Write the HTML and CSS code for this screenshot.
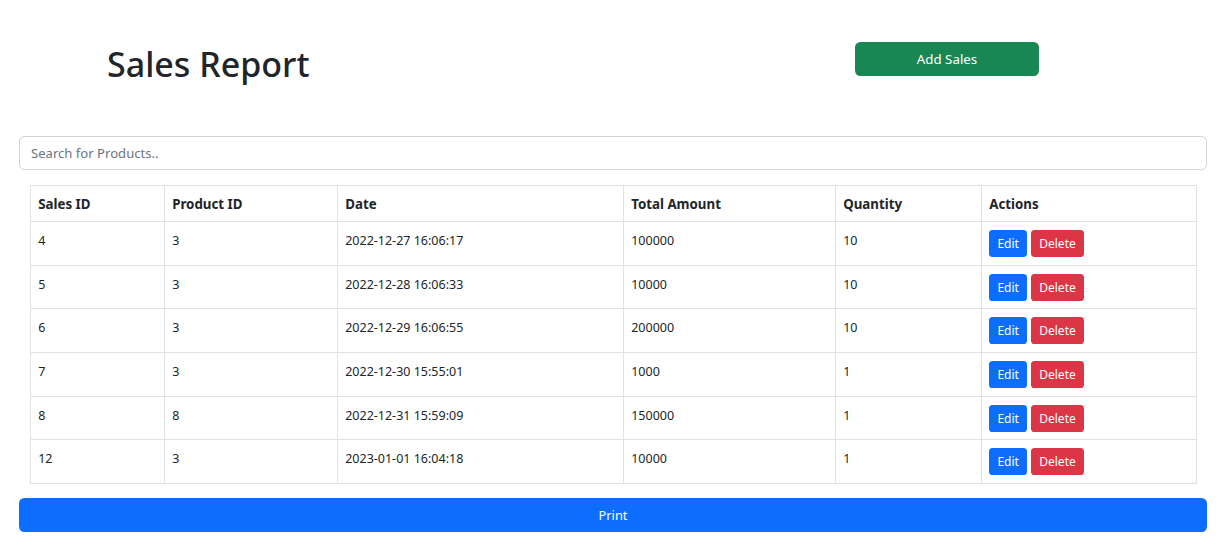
FILE: index.html
```html
<!DOCTYPE html>
<html lang="en">
<head>
<meta charset="utf-8">
<title>Sales Report</title>
<link rel="stylesheet" href="styles.css">
</head>
<body>
<div class="page">
  <div class="header">
    <h1 class="title">Sales Report</h1>
    <button class="btn btn-add">Add Sales</button>
  </div>
  <input class="search" type="text" placeholder="Search for Products..">
  <div class="table-wrap">
    <table class="sales">
      <colgroup>
        <col class="c1"><col class="c2"><col class="c3"><col class="c4"><col class="c5"><col class="c6">
      </colgroup>
      <thead>
        <tr><th>Sales ID</th><th>Product ID</th><th>Date</th><th>Total Amount</th><th>Quantity</th><th>Actions</th></tr>
      </thead>
      <tbody>
        <tr><td>4</td><td>3</td><td>2022-12-27 16:06:17</td><td>100000</td><td>10</td><td><div class="actions"><button class="sm edit">Edit</button><button class="sm del">Delete</button></div></td></tr>
        <tr><td>5</td><td>3</td><td>2022-12-28 16:06:33</td><td>10000</td><td>10</td><td><div class="actions"><button class="sm edit">Edit</button><button class="sm del">Delete</button></div></td></tr>
        <tr><td>6</td><td>3</td><td>2022-12-29 16:06:55</td><td>200000</td><td>10</td><td><div class="actions"><button class="sm edit">Edit</button><button class="sm del">Delete</button></div></td></tr>
        <tr><td>7</td><td>3</td><td>2022-12-30 15:55:01</td><td>1000</td><td>1</td><td><div class="actions"><button class="sm edit">Edit</button><button class="sm del">Delete</button></div></td></tr>
        <tr><td>8</td><td>8</td><td>2022-12-31 15:59:09</td><td>150000</td><td>1</td><td><div class="actions"><button class="sm edit">Edit</button><button class="sm del">Delete</button></div></td></tr>
        <tr><td>12</td><td>3</td><td>2023-01-01 16:04:18</td><td>10000</td><td>1</td><td><div class="actions"><button class="sm edit">Edit</button><button class="sm del">Delete</button></div></td></tr>
      </tbody>
    </table>
  </div>
  <button class="btn btn-print">Print</button>
</div>
</body>
</html>
```

FILE: styles.css
```css
* { box-sizing: border-box; }

body {
  margin: 0;
  font-family: "Noto Sans", "Open Sans", sans-serif;
  color: #212529;
  background: #fff;
}

.page {
  padding: 0 16px 0 19px;
}

.header {
  display: flex;
  justify-content: space-between;
  align-items: flex-start;
  height: 136px;
  padding: 0 168px 0 88px;
}

.title {
  margin: 44px 0 0;
  font-size: 34px;
  font-weight: 500;
  line-height: 1.2;
  color: #212529;
}

.btn {
  border: 0;
  color: #fff;
  font-family: inherit;
  cursor: pointer;
}

.btn-add {
  margin-top: 42px;
  width: 184px;
  height: 34px;
  background: #198754;
  border-radius: 5.4px;
  font-size: 13.3px;
}

.search {
  display: block;
  width: 100%;
  height: 34px;
  padding: 0 11px;
  border: 1px solid #ced4da;
  border-radius: 5.4px;
  font-family: inherit;
  font-size: 13.1px;
  color: #212529;
  outline: none;
}

.search::placeholder {
  color: #6c757d;
}

.table-wrap {
  margin-top: 15px;
  padding: 0 11px;
}

.sales {
  width: 100%;
  table-layout: fixed;
  border-collapse: collapse;
}

.c1 { width: 134px; }
.c2 { width: 173px; }
.c3 { width: 286px; }
.c4 { width: 212px; }
.c5 { width: 146px; }
.c6 { width: 215px; }

.sales th,
.sales td {
  border: 1px solid #dee2e6;
  text-align: left;
  vertical-align: top;
  line-height: 21.6px;
  padding: 7px 7.2px;
}

.sales th {
  height: 34px;
  font-size: 13.3px;
  font-weight: 700;
  padding-top: 7.6px;
  padding-bottom: 5.8px;
}

.sales td {
  height: 43.67px;
  font-size: 12.5px;
  padding-top: 8px;
}

.actions {
  display: flex;
  gap: 4px;
}

.sm {
  height: 27px;
  padding: 0 8.2px;
  border: 0;
  border-radius: 3.6px;
  color: #fff;
  font-family: inherit;
  font-size: 12px;
  cursor: pointer;
}

.edit { background: #0d6efd; }
.del { background: #dc3545; }

.btn-print {
  display: block;
  width: 100%;
  height: 34px;
  margin-top: 14px;
  background: #0d6efd;
  border-radius: 5.4px;
  font-size: 12.8px;
}
```
